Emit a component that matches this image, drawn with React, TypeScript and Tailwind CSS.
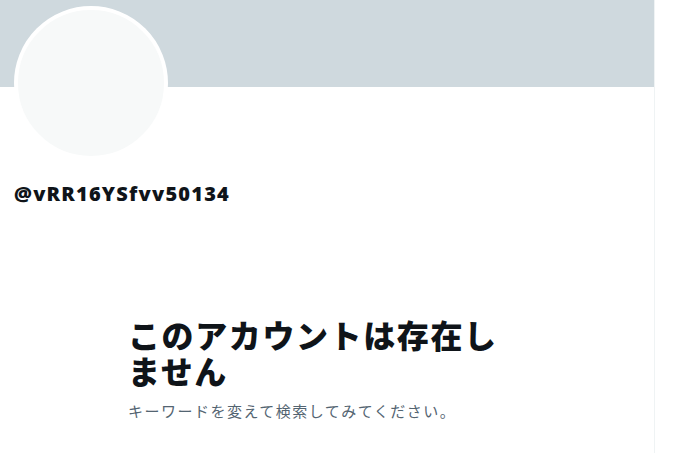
import React from "react";

export default function App() {
  return (
    <div className="flex h-[453px] w-[673px] overflow-hidden bg-white font-['Noto_Sans','Noto_Sans_CJK_JP',sans-serif]">
      <div className="flex w-[655px] shrink-0 flex-col border-r border-[#eff3f4]">
        <div className="h-[87px] w-full bg-[#cfd9de]" />
        <div className="px-[14px]">
          <div className="-mt-[81px] h-[154px] w-[154px] rounded-full border-[4px] border-white bg-[#f7f9f9]" />
          <div className="mt-[22px] font-['Open_Sans',sans-serif] text-[20px] font-extrabold leading-[24px] tracking-[1.2px] text-[#0f1419]">
            @vRR16YSfvv50134
          </div>
        </div>
        <div className="mx-auto mt-[110px] w-[400px] pl-[1px] font-['Noto_Sans_CJK_JP',sans-serif]">
          <h1 className="text-[32px] font-extrabold leading-[36px] tracking-[1.6px] text-[#0f1419]">
            このアカウントは存在しません
          </h1>
          <p className="mt-[13px] text-[15px] leading-[20px] tracking-[1.5px] text-[#536471]">
            キーワードを変えて検索してみてください。
          </p>
        </div>
      </div>
      <div className="flex-1 bg-white" />
    </div>
  );
}
